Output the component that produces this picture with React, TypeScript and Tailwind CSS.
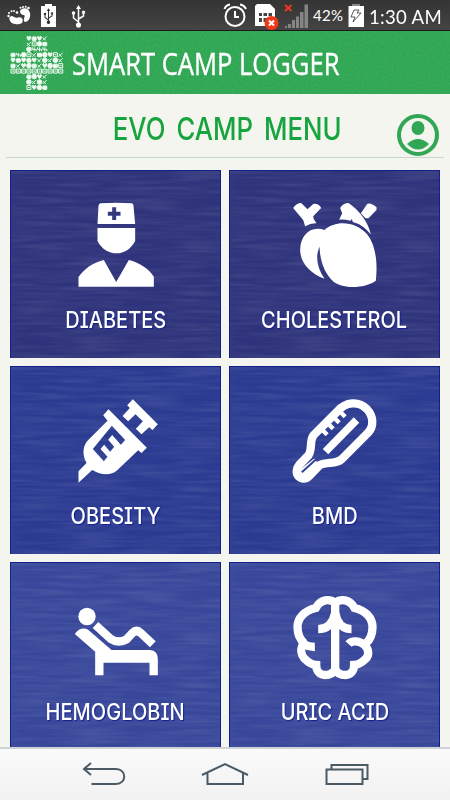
import type { ReactNode } from "react";

const white = "#ffffff";

function Texture({ id, freq, strength }: { id: string; freq: string; strength: number }) {
  return (
    <svg className="absolute inset-0 h-full w-full" aria-hidden="true">
      <filter id={id} x="0" y="0" width="100%" height="100%">
        <feTurbulence type="fractalNoise" baseFrequency={freq} numOctaves="2" seed="4" />
        <feColorMatrix
          values={`0 0 0 0 1  0 0 0 0 1  0 0 0 0 1  ${strength} 0 0 0 ${-strength * 0.35}`}
        />
      </filter>
      <rect width="100%" height="100%" filter={`url(#${id})`} />
    </svg>
  );
}

function Nurse() {
  return (
    <svg viewBox="31.5 30 270 270" className="h-[90px] w-[90px]" fill={white}>
      <path
        fillRule="evenodd"
        d="M120 40Q168 36 214 40Q219 41 219 47L224 102H111L114 47Q115 41 120 40ZM155 52V65H142V77H155V90H167V77H180V65H167V52Z"
      />
      <path d="M111 114H224V153C211 177 191 190 168 190C145 190 123 177 111 153Z" />
      <path d="M54 290V261C70 238 96 218 130 210L167 276L205 210C235 217 265 236 280 260V290Z" />
    </svg>
  );
}

function Heart() {
  return (
    <svg viewBox="118.5 30 270 270" className="h-[90px] w-[90px]" fill={white}>
      <path d="M128 54Q138 39 152 39L171 58L189 41Q206 40 212 54L188 79L190 88L198 100Q181 99 164 109L158 90Z" />
      <path d="M269 54Q278 39 294 39C327 60 354 98 361 133C342 110 325 101 307 96L304 87L300 92Q283 88 266 89L275 70Z" />
      <path d="M331 70L350 42Q360 37 378 52V60L354 85H345Z" />
      <path d="M222 266C181 252 148 219 149 178C150 137 180 105 222 120C259 87 318 97 349 132C376 164 382 219 376 272C342 296 280 297 249 275C222 251 208 211 207 170C192 204 204 239 222 266Z" />
    </svg>
  );
}

function Syringe() {
  return (
    <svg viewBox="31.5 18 270 270" className="h-[90px] w-[90px]" fill={white}>
      <path
        fillRule="evenodd"
        d="M144 58L259 173L243 189L233 181L171 240C151 258 122 256 95 240L54 278V244L78 219C63 190 68 164 84 149L141 92L128 76ZM154 107L97 177L130 214L141 200L120 177L131 164L149 185L161 170L143 149L155 135L181 164L194 150Z"
      />
      <path d="M217 28L292 103L276 120L266 112L243 133L226 116L247 94L225 73L203 94L186 78L208 54L200 46Z" />
    </svg>
  );
}

function Thermometer() {
  return (
    <svg viewBox="58.5 18 270 270" className="h-[90px] w-[90px]" fill="none" stroke={white}>
      <path
        strokeWidth="25"
        strokeLinejoin="round"
        d="M128 137L202 63C226 35 264 32 289 57C309 78 311 108 293 128L213 208C196 223 170 215 147 226L118 256C105 270 92 267 84 259C76 249 77 235 86 225L113 197C127 178 116 157 128 137Z"
      />
      <path strokeWidth="23" d="M165 185L258 90" />
      <path strokeWidth="22" d="M92 250L138 214" />
      <path stroke="#34439a" strokeWidth="6" d="M94 247L137 208" />
      <path strokeWidth="13" d="M155 119L170 134M173 101L188 116M191 83L206 98M209 65L224 80" />
    </svg>
  );
}

function Recliner() {
  return (
    <svg viewBox="91.5 6 270 270" className="h-[90px] w-[90px]" fill={white}>
      <circle cx="139.500" cy="79.500" r="26" />
      <path d="M103 132Q120 108 143 119L213 180H328Q352 182 352 206V256H327V218H189V256H164V185Z" />
      <path
        fill="none"
        stroke={white}
        strokeWidth="25"
        d="M165 105L211 147Q234 162 258 148L276 129Q288 117 301 129L337 163"
      />
    </svg>
  );
}

function Brain() {
  return (
    <svg viewBox="88.5 36 270 270" className="h-[90px] w-[90px]" fill="none" stroke={white} strokeWidth="25">
      <path d="M224 68C208 56 180 56 166 84C132 92 111 114 111 141C111 162 120 180 132 190" />
      <path d="M163 201C148 201 138 197 128 192C118 208 123 226 132 236C140 244 150 254 167 255C167 272 178 285 193 285C208 285 218 280 224 268" />
      <path d="M224 68C240 56 268 56 282 84C316 92 336 114 336 141C336 162 328 180 316 190" />
      <path d="M264 192C275 180 298 182 312 195C326 208 326 226 316 236C308 244 298 254 281 255C281 272 270 285 255 285C240 285 230 280 224 268" />
      <path d="M224 66V276" />
      <path
        fill={white}
        strokeWidth="0"
        d="M173 135Q204 134 211 98H237Q243 134 273 135V160Q250 160 237 148H211Q198 160 173 160Z"
      />
    </svg>
  );
}

// medical cross filled with small pictograms
function CrossLogo() {
  const spots: [number, number, number][] = [];
  for (let row = 0; row < 10; row++) {
    for (let col = 0; col < 10; col++) {
      const wide = row >= 3 && row <= 6;
      if (wide || (col >= 3 && col <= 6)) {
        spots.push([col, row, ((col * 37 + row * 101 + col * row * 13) % 23) % 6]);
      }
    }
  }
  return (
    <svg viewBox="0 0 54 56" className="h-14 w-[54px]" fill="#f0faf2" stroke="#f0faf2" strokeWidth="1">
      {spots.map(([col, row, kind]) => (
        <g key={`${col}-${row}`} transform={`translate(${col * 5.3 + 3} ${row * 5.45 + 3.4})`}>
          {kind === 0 && <circle r="2.300" />}
          {kind === 1 && <path d="M-2 -1.500Q-1 -3 0 -1Q1 -3 2 -1.500Q2 .5 0 2Q-2 .5 -2 -1.500Z" />}
          {kind === 2 && <path fill="none" d="M-2 -2H2V2H-2ZM-1 0H1" />}
          {kind === 3 && <path fill="none" d="M-2 2L2 -2M-2 -1L1 2" />}
          {kind === 4 && <rect x="-2" y="-1.500" width="4" height="3.500" rx=".6" />}
          {kind === 5 && <path fill="none" d="M0 -2V2M-2 0H2M-2 -2V0M2 0V2" />}
        </g>
      ))}
    </svg>
  );
}

function UsbMark({ color = white }: { color?: string }) {
  return (
    <g stroke={color} fill={color} strokeWidth="1.500">
      <path d="M0 -8V9M0 6L-5 2V-2M0 3L5 0V-3" fill="none" />
      <path d="M-2.500 -7L0 -11L2.500 -7Z" strokeWidth="0" />
      <circle cx="0" cy="9" r="1.800" />
      <circle cx="-5" cy="-3" r="1" />
      <path d="M3.800 -5H6.200V-2.500H3.800Z" strokeWidth=".5" />
    </g>
  );
}

function StatusBar() {
  return (
    <div className="flex h-[31px] shrink-0 items-center border-b border-[#17191a] bg-linear-to-b from-[#343434] to-[#444444] text-white">
      <svg width="90" height="30" viewBox="0 0 90 30" fill={white} className="shrink-0">
        <path d="M10 17C13 14 14 19 18 17.500C22 16 24 20 22 23C19 25 12 25 10 21C9 18 9 18 10 17Z" />
        <path d="M20.500 10C24 7 29 8 30 13C31 18 28 22 25 22C22 20 26 17 24 15C22 15 19 13 20.500 10Z" />
        <g>
          <circle cx="8.500" cy="16" r="1.200" />
          <circle cx="9" cy="13" r="1" />
          <circle cx="11.500" cy="11.300" r="1" />
          <circle cx="14" cy="11" r="1" />
          <circle cx="17" cy="12.500" r="1.300" />
          <circle cx="20.500" cy="7.800" r="1" />
          <circle cx="23" cy="6.900" r="1" />
          <circle cx="25.700" cy="6.800" r="1" />
          <circle cx="28.500" cy="8" r="1.300" />
        </g>
        <path d="M45 4H52V6H56V27H41V6H45Z" />
        <g transform="translate(48.5 16) scale(.7)"><UsbMark color="#333333" /></g>
        <g transform="translate(78.5 16)"><UsbMark /></g>
      </svg>
      <svg width="88" height="30" viewBox="222 0 88 30" className="ml-[132px] shrink-0">
        <g fill="none" stroke={white} strokeWidth="2">
          <circle cx="235" cy="16.500" r="9.500" />
          <path d="M235 11V17H239M224.500 9Q226 5 230 4.500M240 4.500Q244 5 246 9" />
        </g>
        <path fill={white} d="M257 4H270L275 9V26H255V6Z" />
        <path fill="#444444" d="M259 13H262V16H259ZM263.500 13H267V16H263.500ZM268.500 13H272V16H268.500ZM259 18H262V22H259ZM263.500 18H267V22H263.500Z" />
        <circle cx="271.500" cy="23" r="7" fill="#f03818" />
        <path stroke={white} strokeWidth="2" d="M269 20.500L274 25.500M274 20.500L269 25.500" />
        <path stroke="#f33818" strokeWidth="2" d="M285 5L291.500 11M291.500 5L285 11" />
        <path fill="#858585" d="M285 26H287V28H285ZM288 24H291V28H288ZM292 20H295V28H292ZM296 16.500H299V28H296ZM300 12H303.500V28H300ZM304.500 4.500H308V28H304.500Z" />
      </svg>
      <span className="ml-[3px] w-[35px] shrink-0 whitespace-nowrap text-[15px] tracking-[0.3px]">42%</span>
      <svg width="16" height="30" viewBox="348 0 16 30" className="shrink-0">
        <path fill="#8b8b8b" d="M352 4H360V7H352Z" />
        <path fill={white} d="M348.500 6H364V27H348.500Z" />
        <path fill="none" stroke="#333" strokeWidth=".8" d="M354 10L351 17H355L353 22L361 13H357L359 10Z" />
      </svg>
      <span className="ml-[5px] mt-px origin-left scale-x-[0.93] whitespace-nowrap text-[20px] tracking-[0.3px]">1:30 AM</span>
    </div>
  );
}

function Tile({ label, color, children }: { label: string; color: string; children: ReactNode }) {
  return (
    <div className={`relative flex h-[187.500px] flex-col items-center overflow-hidden border-x border-t border-[#14208a] pt-[29px] ${color}`}>
      <Texture id={`t-${label.replace(" ", "")}`} freq="0.018 0.25" strength={0.17} />
      <div className="relative">{children}</div>
      <span className="relative mt-[14.500px] scale-x-[0.89] whitespace-nowrap text-[22.500px] font-medium leading-[30px] text-white [font-family:Inter,sans-serif] [font-feature-settings:'cv08'] [text-shadow:1px_1px_1px_#14208a]">
        {label}
      </span>
    </div>
  );
}

function NavBar() {
  return (
    <div className="flex h-[53px] shrink-0 items-center justify-center border-t-2 border-[#cfd3d6] bg-linear-to-b from-[#fafafa] to-[#f2f2f2]">
      <svg width="290" height="26" viewBox="80 761.5 290 26" fill="none" stroke="#4c5a64" strokeWidth="2">
        <path d="M91 762.500L84 768.500L91 774.500M84 768.500H116C127 768.500 127 783.500 116 783.500H91.500" />
        <path d="M202 774.500L225 763.500L248 774.500M207.500 773V783.500H243V773" />
        <path d="M326.500 769H362.500V783.500H326.500ZM331.500 769V764.500H367.500V778.500H362.500" />
      </svg>
    </div>
  );
}

export default function App() {
  return (
    <div className="flex h-[800px] w-[450px] flex-col overflow-hidden bg-[#f4f5ef] font-[Lato,sans-serif]">
      <StatusBar />
      <header className="relative flex h-[63px] shrink-0 items-center bg-[#2ea652] pl-[10px] text-white">
        <Texture id="header" freq="0.5" strength={0.15} />
        <div className="relative"><CrossLogo /></div>
        <span className="relative ml-2 mt-[2px] origin-left scale-x-[0.825] whitespace-nowrap text-[31px] [font-family:'Open_Sans',sans-serif] [-webkit-text-stroke:0.4px_white]">
          SMART CAMP LOGGER
        </span>
      </header>

      <div className="mx-[6px] flex h-16 shrink-0 items-start justify-end border-b border-[#c5d8c9] pt-[20px]">
        <h1 className="mr-[56px] mt-[-5px] origin-right scale-x-[0.83] whitespace-nowrap text-[31px] font-medium leading-[40px] text-[#17a33d] [font-family:Inter,sans-serif] [word-spacing:5px]">
          EVO CAMP MENU
        </h1>
        <svg width="42" height="42" viewBox="0 0 42 42" className="mr-[5px]" fill="#31a755">
          <circle cx="21" cy="21" r="19" fill="none" stroke="#31a755" strokeWidth="4" />
          <ellipse cx="21" cy="14" rx="6.500" ry="7" />
          <path d="M10 30Q21 20 32 30Q21 41 10 30Z" />
        </svg>
      </div>

      <main className="grid min-h-0 flex-1 grid-cols-2 content-start gap-x-2 gap-y-[8.500px] overflow-hidden px-[10px] pt-3">
        <Tile label="DIABETES" color="bg-[#2e337b]"><Nurse /></Tile>
        <Tile label="CHOLESTEROL" color="bg-[#2e337b]"><Heart /></Tile>
        <Tile label="OBESITY" color="bg-[#2b3b91]"><Syringe /></Tile>
        <Tile label="BMD" color="bg-[#2b3b91]"><Thermometer /></Tile>
        <Tile label="HEMOGLOBIN" color="bg-[#38479a]"><Recliner /></Tile>
        <Tile label="URIC ACID" color="bg-[#38479a]"><Brain /></Tile>
      </main>
      <NavBar />
    </div>
  );
}
